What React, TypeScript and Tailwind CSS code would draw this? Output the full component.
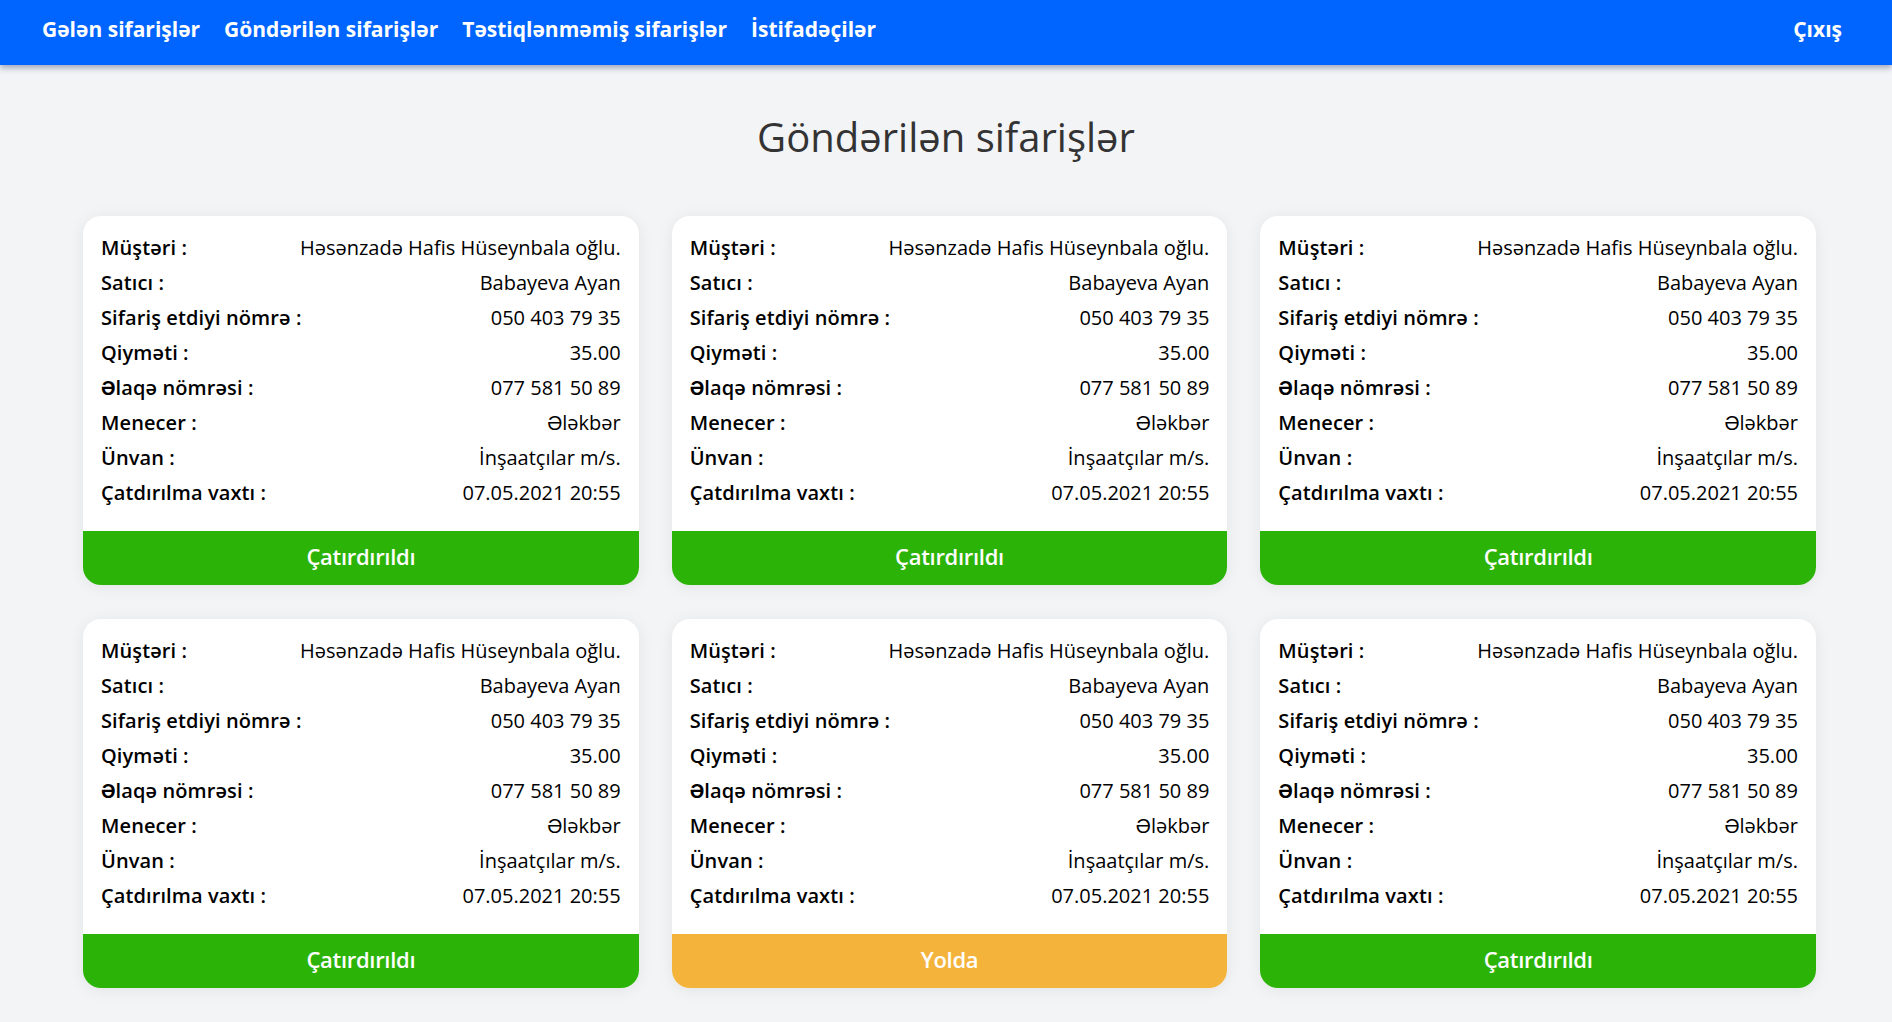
import React from 'react';

type Order = {
  status: 'delivered' | 'onway';
};

const orders: Order[] = [
  { status: 'delivered' },
  { status: 'delivered' },
  { status: 'delivered' },
  { status: 'delivered' },
  { status: 'onway' },
  { status: 'delivered' },
];

const rows: [string, string][] = [
  ['Müştəri :', 'Həsənzadə Hafis Hüseynbala oğlu.'],
  ['Satıcı :', 'Babayeva Ayan'],
  ['Sifariş etdiyi nömrə :', '050 403 79 35'],
  ['Qiyməti :', '35.00'],
  ['Əlaqə nömrəsi :', '077 581 50 89'],
  ['Menecer :', 'Ələkbər'],
  ['Ünvan :', 'İnşaatçılar m/s.'],
  ['Çatdırılma vaxtı :', '07.05.2021 20:55'],
];

function OrderCard({ order }: { order: Order }) {
  return (
    <div className="bg-white rounded-[18px] shadow-[0_2px_16px_rgba(0,0,0,0.07)] overflow-hidden flex flex-col">
      <div className="px-[18px] pt-[14px] pb-[21px]">
        {rows.map(([label, value]) => (
          <div key={label} className="flex justify-between items-center h-[35px] text-[20px] text-black">
            <span className="font-semibold tracking-[0.1px]">{label}</span>
            <span>{value}</span>
          </div>
        ))}
      </div>
      {order.status === 'delivered' ? (
        <div className="h-[54px] pb-[3px] bg-[#2cb308] flex items-center justify-center text-white text-[22px] font-semibold tracking-[-0.3px]">
          Çatırdırıldı
        </div>
      ) : (
        <div className="h-[54px] pb-[3px] bg-[#f4b43c] flex items-center justify-center text-white text-[22px] font-semibold tracking-[-0.3px]">
          Yolda
        </div>
      )}
    </div>
  );
}

export default function App() {
  return (
    <div className="min-h-screen bg-[#f3f4f6] font-['Open_Sans',sans-serif]">
      <header className="h-[65px] bg-[#0065ff] flex items-center justify-between pl-[42px] pr-[50px] shadow-[0_3px_6px_rgba(0,30,80,0.35)] relative">
        <nav className="flex items-center gap-[24px] text-white text-[21px] font-bold -mt-[6px]">
          <a>Gələn sifarişlər</a>
          <a>Göndərilən sifarişlər</a>
          <a>Təstiqlənməmiş sifarişlər</a>
          <a>İstifadəçilər</a>
        </nav>
        <a className="text-white text-[21px] font-bold -mt-[6px]">Çıxış</a>
      </header>
      <h1 className="text-center text-[40px] text-[#333] mt-[45px] mb-[52px] leading-[54px]">
        Göndərilən sifarişlər
      </h1>
      <div className="grid grid-cols-3 gap-x-[33px] gap-y-[34px] w-[1733px] ml-[83px] pb-[34px]">
        {orders.map((o, i) => (
          <OrderCard key={i} order={o} />
        ))}
      </div>
    </div>
  );
}
